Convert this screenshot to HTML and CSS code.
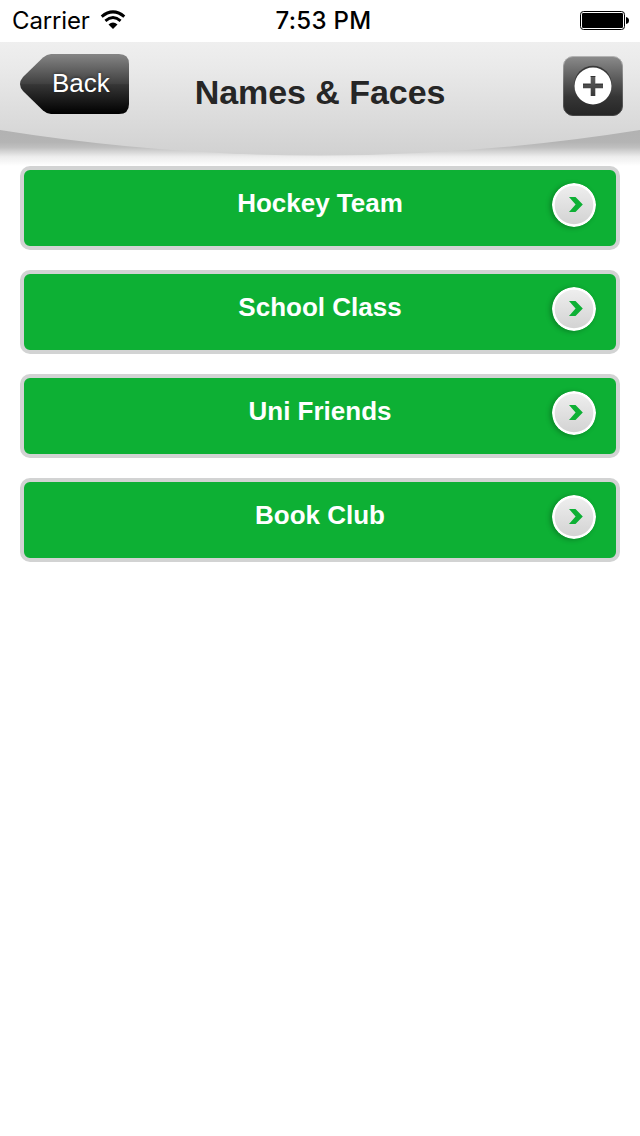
FILE: index.html
```html
<!DOCTYPE html>
<html lang="en">
<head>
    <meta charset="UTF-8">
    <meta name="viewport" content="width=device-width, initial-scale=1.0">
    <title>Names &amp; Faces</title>
    <link rel="stylesheet" href="styles.css">
</head>
<body>
    <div class="status-bar">
        <div class="carrier">
            <span>Carrier</span>
            <svg class="wifi" width="26" height="20" viewBox="0 0 26 20">
                <path d="M1.7 6.6 Q13 -2.8 24.3 6.6" fill="none" stroke="#000" stroke-width="3"/>
                <path d="M5.4 10.8 Q13 4.4 20.6 10.8" fill="none" stroke="#000" stroke-width="2.9"/>
                <path d="M8.5 14.4 Q13 10.4 17.5 14.4 L13 19Z"/>
            </svg>
        </div>
        <div class="time">7:53 PM</div>
        <div class="battery">
            <svg width="50" height="20" viewBox="0 0 50 20">
                <rect x="0.5" y="0.5" width="44" height="18" rx="3" fill="#fff" stroke="#000"/>
                <rect x="2" y="2" width="41" height="15" rx="1.2"/>
                <path d="M46 6 Q49 6.5 49 9.5 Q49 12.5 46 13Z"/>
            </svg>
        </div>
    </div>

    <header class="header">
        <svg class="header-bg" width="640" height="125" viewBox="0 0 640 125">
            <defs>
                <linearGradient id="shade" x1="0" y1="88" x2="0" y2="125" gradientUnits="userSpaceOnUse">
                    <stop offset="0" stop-color="#b2b2b2"/>
                    <stop offset="0.36" stop-color="#b4b4b4"/>
                    <stop offset="0.5" stop-color="#c0c0c0"/>
                    <stop offset="0.62" stop-color="#d6d6d6"/>
                    <stop offset="0.75" stop-color="#ededed"/>
                    <stop offset="1" stop-color="#fff"/>
                </linearGradient>
                <linearGradient id="panel" x1="0" y1="0" x2="0" y2="114" gradientUnits="userSpaceOnUse">
                    <stop offset="0" stop-color="#efefef"/>
                    <stop offset="0.22" stop-color="#eaeaea"/>
                    <stop offset="1" stop-color="#d1d1d1"/>
                </linearGradient>
            </defs>
            <rect y="85" width="640" height="40" fill="url(#shade)"/>
            <path d="M0 1 H640 V89 Q480 114.5 320 114.5 Q160 114.5 0 89Z" fill="url(#panel)"/>
        </svg>
        <a class="back-btn" href="#">
            <svg class="back-shape" width="109" height="60" viewBox="0 0 109 60">
                <defs>
                    <linearGradient id="back" x1="0" y1="0" x2="0" y2="1">
                        <stop offset="0" stop-color="#858585"/>
                        <stop offset="0.5" stop-color="#404040"/>
                        <stop offset="0.51" stop-color="#363636"/>
                        <stop offset="1" stop-color="#000"/>
                    </linearGradient>
                </defs>
                <path d="M31 0 H99 Q109 0 109 10 V50 Q109 60 99 60 H31 Q27 60 23 56.5 L3 37 Q-3 30 3 23 L23 3.5 Q27 0 31 0Z" fill="url(#back)"/>
            </svg>
            <span class="back-label">Back</span>
        </a>
        <h1>Names &amp; Faces</h1>
        <button class="add-btn" type="button" aria-label="Add">
            <svg width="60" height="60" viewBox="0 0 60 60">
                <defs>
                    <linearGradient id="add" x1="0" y1="0" x2="0" y2="60" gradientUnits="userSpaceOnUse">
                        <stop offset="0" stop-color="#8c8c8c"/>
                        <stop offset="0.5" stop-color="#4c4c4c"/>
                        <stop offset="0.68" stop-color="#363636"/>
                        <stop offset="1" stop-color="#252525"/>
                    </linearGradient>
                    <linearGradient id="rim" x1="0" y1="0" x2="0" y2="1">
                        <stop offset="0" stop-color="#b2b2b2"/>
                        <stop offset="0.5" stop-color="#686868"/>
                        <stop offset="1" stop-color="#454545"/>
                    </linearGradient>
                </defs>
                <rect x="0.5" y="0.5" width="59" height="59" rx="9.5" fill="url(#add)" stroke="url(#rim)"/>
                <circle cx="30" cy="28.6" r="18.8" fill="#383838"/>
                <circle cx="30" cy="30" r="18.5" fill="#fff"/>
                <path d="M27.7 20 H32.3 V27.7 H40 V32.3 H32.3 V40 H27.7 V32.3 H20 V27.7 H27.7Z" fill="url(#add)"/>
                <path d="M27.7 20.5 H32.3 M20 28.2 H27.7 M32.3 28.2 H40" stroke="#333" stroke-width="1"/>
            </svg>
        </button>
    </header>

    <svg class="symbols" width="0" height="0">
        <linearGradient id="disc" x1="0" y1="0" x2="0" y2="1">
            <stop offset="0" stop-color="#eee"/>
            <stop offset="1" stop-color="#d3d3d3"/>
        </linearGradient>
        <symbol id="arrow" viewBox="0 0 44 44">
            <circle cx="22" cy="22" r="22" fill="#fff"/>
            <circle cx="22" cy="22" r="19.3" fill="url(#disc)"/>
            <path d="M17 14 H23.5 L30.8 21.5 L23.5 29 H17 L23.6 21.5Z" fill="#0eb035"/>
        </symbol>
    </svg>

    <main class="groups">
        <a class="group" href="#">
            <span class="group-name">Hockey Team</span>
            <svg class="arrow" width="44" height="44"><use href="#arrow"/></svg>
        </a>
        <a class="group" href="#">
            <span class="group-name">School Class</span>
            <svg class="arrow" width="44" height="44"><use href="#arrow"/></svg>
        </a>
        <a class="group" href="#">
            <span class="group-name">Uni Friends</span>
            <svg class="arrow" width="44" height="44"><use href="#arrow"/></svg>
        </a>
        <a class="group" href="#">
            <span class="group-name">Book Club</span>
            <svg class="arrow" width="44" height="44"><use href="#arrow"/></svg>
        </a>
    </main>
</body>
</html>
```
FILE: styles.css
```css
* {
    margin: 0;
    padding: 0;
    box-sizing: border-box;
}

body {
    font-family: "Liberation Sans", Arial, sans-serif;
    background: #fff;
    min-height: 100vh;
}

svg {
    display: block;
}

.status-bar {
    display: grid;
    grid-template-columns: 1fr auto 1fr;
    height: 41px;
    padding: 0 10px 0 12px;
    font-family: Inter, sans-serif;
    font-size: 24px;
    line-height: 41px;
    color: #000;
}

.carrier {
    display: flex;
    gap: 10px;
    letter-spacing: -0.15px;
}

.wifi {
    margin-top: 10px;
}

.time {
    padding-left: 5px;
    font-weight: 500;
    letter-spacing: 0.3px;
}

.battery {
    justify-self: end;
    padding-top: 11px;
}

.header {
    position: relative;
    display: grid;
    grid-template-columns: 1fr auto 1fr;
    align-items: start;
    height: 125px;
    padding: 0 17px 0 20px;
}

.header-bg {
    position: absolute;
    top: 0;
    left: 0;
    z-index: -1;
}

.back-btn {
    position: relative;
    width: 109px;
    height: 60px;
    margin-top: 13px;
    padding-left: 32px;
    font-size: 26px;
    line-height: 59px;
    color: #fff;
    text-decoration: none;
}

.back-shape {
    position: absolute;
    top: 0;
    left: 0;
}

.back-label {
    position: relative;
    text-shadow: 0 -1px 3px rgba(0, 0, 0, 0.4);
}

.header h1 {
    margin-top: 31px;
    padding-right: 3px;
    font-size: 34px;
    line-height: 40px;
    letter-spacing: -0.05px;
    color: #262626;
}

.add-btn {
    justify-self: end;
    margin-top: 15px;
    border: none;
    background: none;
    cursor: pointer;
}

.groups {
    display: flex;
    flex-direction: column;
    gap: 20px;
    padding: 0 20px;
}

.group {
    display: grid;
    grid-template-columns: 44px 1fr 44px;
    height: 84px;
    padding: 13px 20px 0;
    border: 4px solid #d2d3d3;
    border-radius: 10px;
    background: #0db034;
    color: #fff;
    text-decoration: none;
}

.group-name {
    grid-column: 2;
    font-size: 26px;
    font-weight: bold;
    line-height: 40px;
    text-align: center;
}

.arrow {
    border-radius: 50%;
    box-shadow: -2px 1px 5px rgba(0, 0, 0, 0.25);
}
```
